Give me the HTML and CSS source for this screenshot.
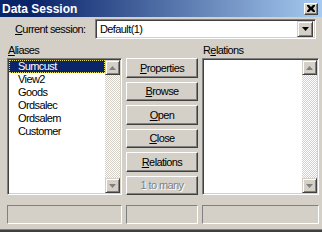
FILE: index.html
```html
<!DOCTYPE html>
<html>
<head>
<meta charset="utf-8">
<link rel="stylesheet" href="styles.css">
</head>
<body>
<div class="window">
  <div class="titlebar">
    <span class="title">Data Session</span>
    <span class="close-btn">
      <svg width="8" height="7" viewBox="0 0 8 7"><path d="M0 0h2l2 2 2-2h2v1l-2 2.5 2 2.5v1h-2l-2-2-2 2h-2v-1l2-2.5-2-2.5z" fill="#000"/></svg>
    </span>
  </div>
  <div class="session-row">
    <span class="session-label"><u>C</u>urrent session:</span>
    <div class="combo">
      <span class="combo-text">Default(1)</span>
      <span class="combo-btn"><svg width="7" height="4" viewBox="0 0 7 4"><path d="M0 0h7l-3.5 4z" fill="#000"/></svg></span>
    </div>
  </div>
  <div class="main">
    <div class="caption"><u>A</u>liases</div>
    <div></div>
    <div class="caption caption-rel">R<u>e</u>lations</div>

    <div class="listbox">
      <ul class="items">
        <li class="item selected"><span class="focus">Sumcust</span></li>
        <li class="item">View2</li>
        <li class="item">Goods</li>
        <li class="item">Ordsalec</li>
        <li class="item">Ordsalem</li>
        <li class="item">Customer</li>
      </ul>
      <div class="scrollbar">
        <span class="sb-btn"><svg width="7" height="4" viewBox="0 0 7 4"><path d="M3.5 0l3.5 4h-7z" fill="#808080"/></svg></span>
        <span class="sb-track"></span>
        <span class="sb-btn"><svg width="7" height="4" viewBox="0 0 7 4"><path d="M0 0h7l-3.5 4z" fill="#808080"/></svg></span>
      </div>
    </div>

    <div class="buttons">
      <button class="btn"><u>P</u>roperties</button>
      <button class="btn"><u>B</u>rowse</button>
      <button class="btn"><u>O</u>pen</button>
      <button class="btn"><u>C</u>lose</button>
      <button class="btn"><u>R</u>elations</button>
      <button class="btn disabled">1 to many</button>
    </div>

    <div class="listbox">
      <ul class="items"></ul>
      <div class="scrollbar">
        <span class="sb-btn"><svg width="7" height="4" viewBox="0 0 7 4"><path d="M3.5 0l3.5 4h-7z" fill="#808080"/></svg></span>
        <span class="sb-track"></span>
        <span class="sb-btn"><svg width="7" height="4" viewBox="0 0 7 4"><path d="M0 0h7l-3.5 4z" fill="#808080"/></svg></span>
      </div>
    </div>

    <div class="panel"></div>
    <div class="panel"></div>
    <div class="panel"></div>
  </div>
  <div class="bottom-edge"></div>
</div>
</body>
</html>
```
FILE: styles.css
```css
* { box-sizing: border-box; }
html, body {
  margin: 0;
  padding: 0;
  background: #d4d0c8;
}
body {
  width: 322px;
  height: 232px;
  overflow: hidden;
  font-family: "Liberation Sans", Arial, sans-serif;
  font-size: 11px;
  letter-spacing: -0.6px;
  color: #000;
}
u { text-decoration: underline; text-underline-offset: 1px; }
.window {
  width: 322px;
  height: 232px;
  display: flex;
  flex-direction: column;
}
.titlebar {
  height: 17px;
  background: linear-gradient(to right, #0a246a 10%, #a6caf0);
  display: flex;
  align-items: center;
  justify-content: space-between;
  padding-left: 2px;
  padding-right: 4px;
}
.title {
  color: #fff;
  font-weight: bold;
  font-size: 12px;
  letter-spacing: 0;
  line-height: 14px;
}
.close-btn {
  width: 14px;
  height: 12px;
  background: #d4d0c8;
  border: 1px solid;
  border-color: #fff #404040 #404040 #fff;
  box-shadow: inset -1px -1px #808080;
  display: flex;
  align-items: center;
  justify-content: center;
}
.session-row {
  margin-top: 2px;
  height: 20px;
  display: flex;
  align-items: center;
  padding-left: 15px;
  padding-right: 6px;
}
.session-label {
  width: 80px;
}
.combo {
  flex: 1;
  height: 20px;
  background: #fff;
  border: 1px solid;
  border-color: #808080 #fff #fff #808080;
  box-shadow: inset 1px 1px #404040, inset -1px -1px #d4d0c8;
  display: flex;
  align-items: center;
  padding: 2px;
}
.combo-text {
  flex: 1;
  padding-left: 2px;
}
.combo-btn {
  width: 16px;
  height: 16px;
  background: #d4d0c8;
  border: 1px solid;
  border-color: #d4d0c8 #404040 #404040 #d4d0c8;
  box-shadow: inset 1px 1px #fff, inset -1px -1px #808080;
  display: flex;
  align-items: center;
  justify-content: center;
}
.main {
  margin-top: 5px;
  padding-left: 7px;
  display: grid;
  grid-template-columns: 115px 72px 117px;
  grid-template-rows: 14px 137px 29px;
  column-gap: 4px;
  row-gap: 0;
}
.caption {
  padding-left: 1px;
  line-height: 12px;
}
.panel {
  margin-top: 10px;
  border: 1px solid;
  border-color: #808080 #fff #fff #808080;
}
.listbox {
  background: #fff;
  border: 1px solid;
  border-color: #808080 #fff #fff #808080;
  box-shadow: inset 1px 1px #404040, inset -1px -1px #d4d0c8;
  padding: 1px;
  display: flex;
}
.items {
  flex: 1;
  list-style: none;
  margin: 0;
  padding: 0;
}
.item {
  height: 13px;
  line-height: 13px;
  padding-left: 9px;
}
.item.selected {
  background: #0a246a;
  color: #fff;
  padding-left: 0;
}
.focus {
  display: block;
  height: 13px;
  padding-left: 9px;
  outline: 1px dotted #e8e060;
  outline-offset: -1px;
}
.scrollbar {
  width: 15px;
  display: flex;
  flex-direction: column;
}
.sb-btn {
  height: 15px;
  background: #d4d0c8;
  border: 1px solid;
  border-color: #d4d0c8 #404040 #404040 #d4d0c8;
  box-shadow: inset 1px 1px #fff, inset -1px -1px #808080;
  display: flex;
  align-items: center;
  justify-content: center;
}
.sb-track {
  flex: 1;
  background-image: repeating-conic-gradient(#fff 0% 25%, #d4d0c8 0% 50%);
  background-size: 2px 2px;
}
.buttons {
  display: flex;
  flex-direction: column;
  gap: 4px;
}
.btn {
  height: 20px;
  margin: 0;
  padding: 0;
  background: #d4d0c8;
  font-family: inherit;
  font-size: 11px;
  letter-spacing: -0.6px;
  color: #000;
  border: 1px solid;
  border-color: #fff #404040 #404040 #fff;
  box-shadow: inset -1px -1px #808080, inset 1px 1px #d4d0c8;
}
.btn.disabled {
  color: #808080;
  text-shadow: 1px 1px #fff;
}
.bottom-edge {
  margin-top: auto;
  height: 3px;
  border-top: 1px solid #808080;
  background: #404040;
}
```
